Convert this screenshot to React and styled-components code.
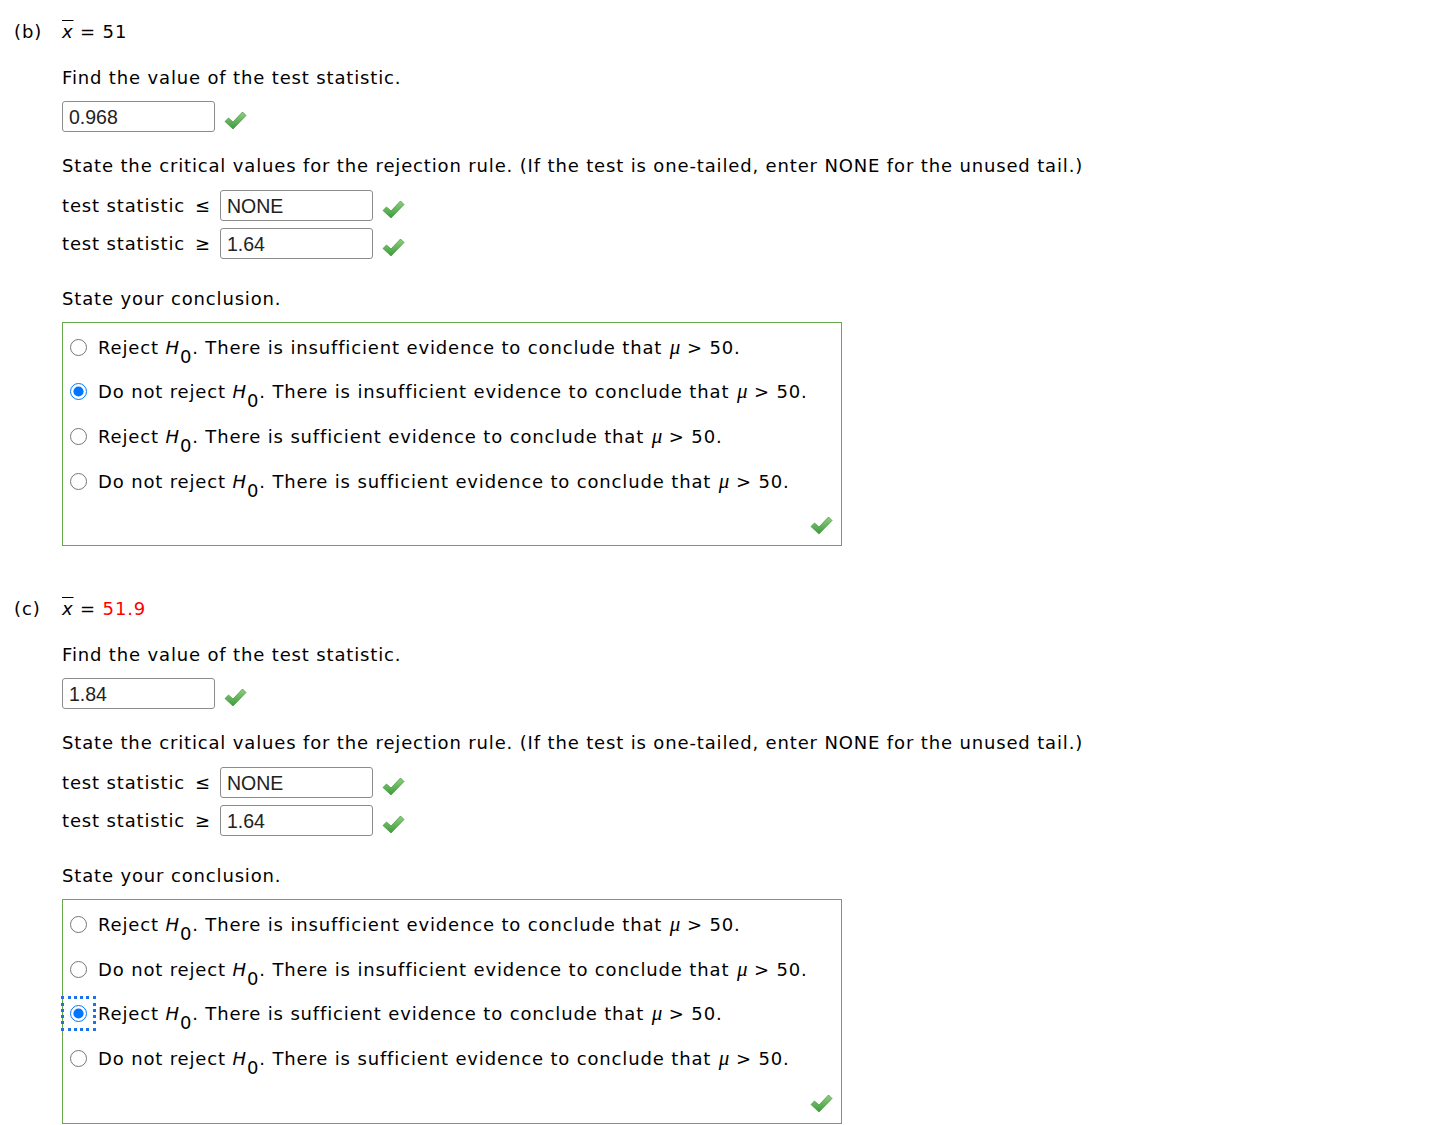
import React from "react";
import styled, { createGlobalStyle } from "styled-components";

const Global = createGlobalStyle`
  html, body { margin: 0; padding: 0; background: #fff; }
  body { font-family: "DejaVu Sans", Verdana, sans-serif; color: #000; }
`;

const Page = styled.main`
  padding: 21px 0 0 14px;
  display: flex;
  flex-direction: column;
  gap: 52px;
  font-size: 18px;
  line-height: 22px;
  letter-spacing: 0.85px;
`;

const Part = styled.section`
  display: flex;
  flex-direction: column;
`;

const Header = styled.div`
  display: flex;
  height: 22px;
  align-items: center;
  white-space: pre;
`;

const PartLabel = styled.span`
  width: 48px;
`;

const XBar = styled.span`
  font-style: italic;
  text-decoration: overline;
`;

const Value = styled.span`
  color: ${(p) => (p.$red ? "#ff0000" : "#000")};
`;

const Body = styled.div`
  padding-left: 48px;
  display: flex;
  flex-direction: column;
`;

const Prompt = styled.p`
  margin: ${(p) => p.$top}px 0 0 0;
  height: 22px;
  white-space: nowrap;
`;

const FieldRow = styled.div`
  display: flex;
  align-items: flex-end;
  margin-top: ${(p) => p.$top}px;
  height: 31px;
`;

const Answer = styled.div`
  width: 153px;
  height: 31px;
  box-sizing: border-box;
  border: 1px solid #8c8c8c;
  border-radius: 3px;
  padding: 0 6px;
  display: flex;
  align-items: center;
  font-family: "Liberation Sans", Arial, sans-serif;
  font-size: 19.5px;
  letter-spacing: 0;
  color: #222;
  background: #fff;
`;

const CheckWrap = styled.span`
  display: inline-flex;
  margin-left: 9px;
  margin-bottom: 2px;
`;

const RelLabel = styled.span`
  display: flex;
  align-items: center;
  height: 31px;
  gap: 10px;
  margin-right: 9px;
  white-space: nowrap;
`;

const Choices = styled.div`
  margin-top: 12px;
  width: 780px;
  box-sizing: border-box;
  border: 1px solid #6aa84f;
  padding: 2px 8px 10px 0;
  display: flex;
  flex-direction: column;
`;

const Choice = styled.label`
  display: flex;
  align-items: center;
  height: 44.6px;
  padding-left: 6px;
  white-space: nowrap;
`;

const ChoiceText = styled.span`
  white-space: pre;
`;

const RadioBox = styled.span`
  display: inline-flex;
  align-items: center;
  justify-content: center;
  width: 35px;
  height: 35px;
  margin-left: -8px;
  margin-right: 2px;
  box-sizing: border-box;
  outline: ${(p) => (p.$focus ? "3px dotted #1a73e8" : "none")};
  outline-offset: -3px;
`;

const Radio = styled.input`
  width: 17px;
  height: 17px;
  margin: 0;
  accent-color: #0075ff;
`;

const H = styled.span`
  font-style: italic;
`;

const Sub = styled.sub`
  font-size: 18px;
  vertical-align: -9px;
  line-height: 0;
`;

const Mu = styled.span`
  font-family: "Liberation Serif", "Times New Roman", serif;
  font-style: italic;
  font-size: 21px;
  letter-spacing: 0;
  margin-left: 1px;
`;

const Footer = styled.div`
  display: flex;
  justify-content: flex-end;
  margin-top: 13px;
  height: 19px;
`;

function Check() {
  return (
    <svg width="23" height="19" viewBox="0 0 23 19">
      <defs>
        <linearGradient id="ck" x1="0" y1="0" x2="0" y2="1">
          <stop offset="0" stopColor="#8fd07c" />
          <stop offset="1" stopColor="#3c9a3c" />
        </linearGradient>
      </defs>
      <path
        d="M1 10.5 L4.5 7 L9 11 L18.5 1 L22 4.5 L9 18 Z"
        fill="url(#ck)"
        stroke="#4a9a45"
        strokeWidth="0.8"
        strokeLinejoin="round"
      />
    </svg>
  );
}

const options = [
  ["Reject", "insufficient"],
  ["Do not reject", "insufficient"],
  ["Reject", "sufficient"],
  ["Do not reject", "sufficient"],
];

function PartBlock({ label, xbar, red, stat, chosen, focus }) {
  return (
    <Part>
      <Header>
        <PartLabel>({label})</PartLabel>
        <XBar>x</XBar>
        <span> = </span>
        <Value $red={red}>{xbar}</Value>
      </Header>
      <Body>
        <Prompt $top={24}>Find the value of the test statistic.</Prompt>
        <FieldRow $top={12}>
          <Answer>{stat}</Answer>
          <CheckWrap><Check /></CheckWrap>
        </FieldRow>
        <Prompt $top={23}>
          State the critical values for the rejection rule. (If the test is one-tailed, enter NONE for the unused tail.)
        </Prompt>
        <FieldRow $top={13}>
          <RelLabel>test statistic <span>≤</span></RelLabel>
          <Answer>NONE</Answer>
          <CheckWrap><Check /></CheckWrap>
        </FieldRow>
        <FieldRow $top={7}>
          <RelLabel>test statistic <span>≥</span></RelLabel>
          <Answer>1.64</Answer>
          <CheckWrap><Check /></CheckWrap>
        </FieldRow>
        <Prompt $top={29}>State your conclusion.</Prompt>
        <Choices>
          {options.map(([act, ev], i) => (
            <Choice key={i}>
              <RadioBox $focus={focus && chosen === i}>
                <Radio type="radio" name={label} checked={chosen === i} readOnly />
              </RadioBox>
              <ChoiceText>
                {act} <H>H</H><Sub>0</Sub>. There is {ev} evidence to conclude that <Mu>μ</Mu> &gt; 50.
              </ChoiceText>
            </Choice>
          ))}
          <Footer><Check /></Footer>
        </Choices>
      </Body>
    </Part>
  );
}

export default function App() {
  return (
    <>
      <Global />
      <Page>
        <PartBlock label="b" xbar="51" stat="0.968" chosen={1} />
        <PartBlock label="c" xbar="51.9" red stat="1.84" chosen={2} focus />
      </Page>
    </>
  );
}
